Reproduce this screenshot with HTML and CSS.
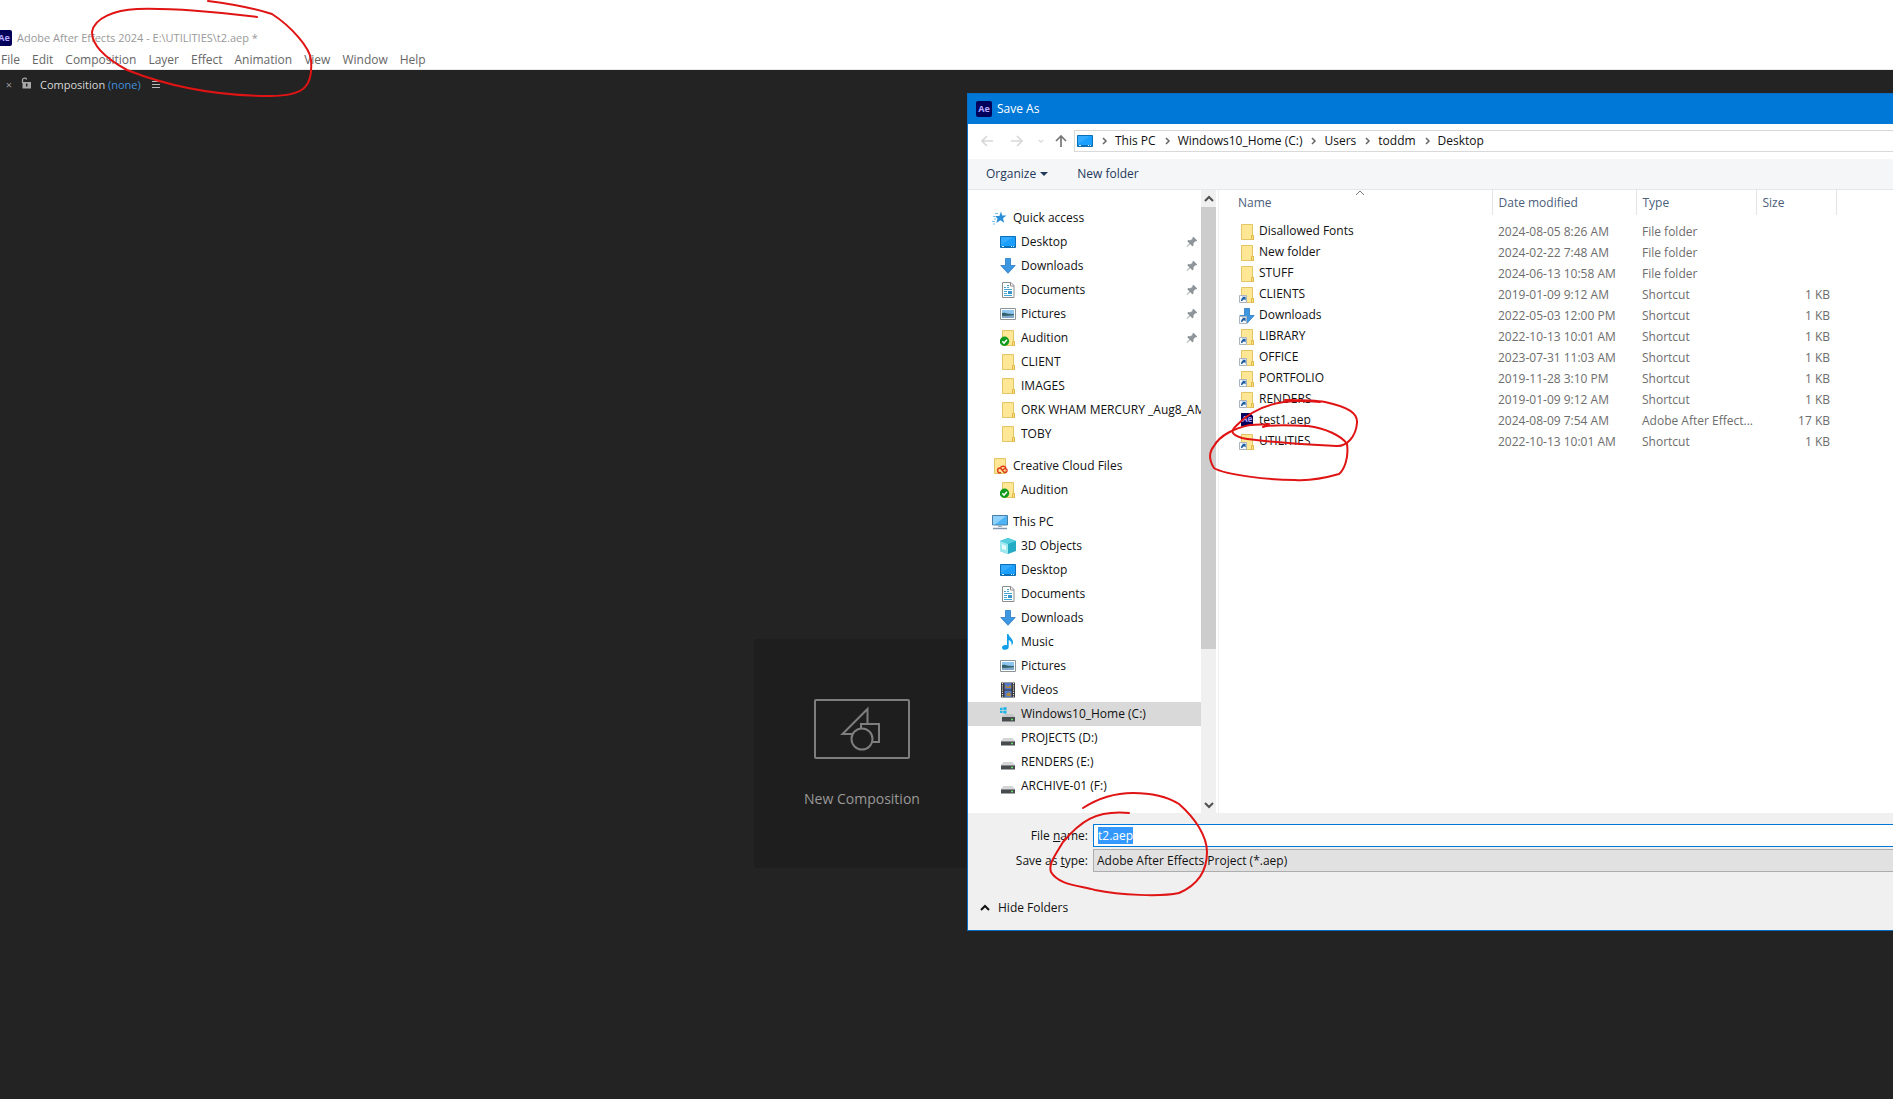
FILE: index.html
```
<!DOCTYPE html>
<html lang="en">
<head>
    <meta charset="UTF-8">
    <meta name="viewport" content="width=device-width, initial-scale=1.0">
    <title>Adobe After Effects 2024 - E:\UTILITIES\t2.aep *</title>
    <link rel="stylesheet" href="styles.css">
</head>
<body>
    <!-- Icon sprite -->
    <svg class="sprite" aria-hidden="true">
        <symbol id="ae" viewBox="0 0 16 16">
            <rect width="16" height="16" rx="2" fill="#00005b"/>
            <text x="8" y="11" text-anchor="middle" font-size="9" font-weight="bold" fill="#b4a8ff">Ae</text>
        </symbol>
        <symbol id="folder" viewBox="0 0 16 16">
            <path d="M2.500.5h11v11h1v4h-12z" fill="#ffe796" stroke="#e3c565"/>
            <path d="M12.500 15.500v-4h2v4z" fill="#ffe085" stroke="#dfba4a"/>
        </symbol>
        <symbol id="folder-ok" viewBox="0 0 16 16">
            <use href="#folder"/>
            <circle cx="4.500" cy="11.300" r="4.700" fill="#109a1c"/>
            <path d="M2.300 11.300l1.700 1.800 3-3.300" fill="none" stroke="#fff" stroke-width="1.500"/>
        </symbol>
        <symbol id="folder-cc" viewBox="0 0 16 16">
            <path d="M2.500.5h11v15h-11z" fill="#ffe796" stroke="#e3c565"/>
            <path d="M9 14.800H8a2.400 2.400 0 0 1 0-4.800c1.500 0 3 4.500 5 4.500a2 2 0 0 0 0-4c-1.300 0-2 1.500-3 2.300M8.500 9.500c1.500-2 5-1.500 5.500.8" fill="none" stroke="#e03a1c" stroke-width="1.400"/>
        </symbol>
        <symbol id="arrow-mark" viewBox="0 0 16 16">
            <path d="M.5 8.500h7v7h-7z" fill="#f4f8fc" stroke="#a9b4bf"/>
            <path d="M2 14c0-2 .8-3 2-3.300L3 9.800h3.600v3.600l-1-1C4 12.400 3.400 13 3.400 14z" fill="#1d5c9f"/>
        </symbol>
        <symbol id="folder-link" viewBox="0 0 16 16">
            <use href="#folder"/>
            <use href="#arrow-mark"/>
        </symbol>
        <symbol id="download" viewBox="0 0 16 16">
            <path d="M5.500.5h5v7h4.700L8 15.300.8 7.500h4.700z" fill="#3d96e0" stroke="#2a7bc4" stroke-width=".8"/>
        </symbol>
        <symbol id="download-link" viewBox="0 0 16 16">
            <use href="#download"/>
            <use href="#arrow-mark"/>
        </symbol>
        <symbol id="desktop" viewBox="0 0 16 16">
            <path d="M.5 2.500h15v11H.5z" fill="#1a9fff" stroke="#0b6fb8"/>
            <path d="M1 11L13 3H1z" fill="#45b2ff" opacity=".6"/>
            <path d="M1 12.500h14" stroke="#0b6fb8"/>
            <path d="M2 12.500h2m7 0h1m1 0h1" stroke="#d9f0ff"/>
        </symbol>
        <symbol id="document" viewBox="0 0 16 16">
            <path d="M2.500.5h8.500l3 3v12H2.500z" fill="#fff" stroke="#8c8c8c"/>
            <path d="M10.500.5v3.500H14" fill="none" stroke="#8c8c8c"/>
            <path d="M7 3.500h2M4 5.500h2m1 0h2M4 7.500h8M4 9.500h3M4 11.500h3M4 13.500h8" stroke="#42a5d5"/>
            <path d="M8 9h4v3H8z" fill="#3a95c8"/>
        </symbol>
        <symbol id="picture" viewBox="0 0 16 16">
            <path d="M.5 2.500h15v11H.5z" fill="#fff" stroke="#8c9399"/>
            <path d="M2 4h12v8H2z" fill="#8cc6f0"/>
            <path d="M2 7c3-1 5 1 12 1v4H2z" fill="#35606f"/>
            <path d="M2 10c4 0 8-.5 12-1v3H2z" fill="#7fa9c9"/>
        </symbol>
        <symbol id="star" viewBox="0 0 16 16">
            <path d="M9 1.500l1.200 4 4.300.1-3.500 2.600 1.200 4.600-3.800-2.600L4.300 13l1.200-4.600L3 6h4.400z" fill="#2b8fd8"/>
            <path d="M3 3.500h3M1 6.500h2M2 9h2M0 11.500h3M1 14h2" stroke="#7bbdea"/>
        </symbol>
        <symbol id="computer" viewBox="0 0 16 16">
            <path d="M.5 1.500h15v9.500H.5z" fill="#4db4f5" stroke="#4a7fa5"/>
            <path d="M1 2h13L3 10.500H1z" fill="#8ed2fb"/>
            <path d="M6 12.500h4" stroke="#9ab"/>
            <path d="M1 14.500h14" stroke="#8296b0" stroke-width="1.500"/>
        </symbol>
        <symbol id="cube" viewBox="0 0 16 16">
            <path d="M8 0l8 3v10l-8 3-8-3V3z" fill="#25abc4"/>
            <path d="M8 0l8 3-8 3-8-3z" fill="#55cfe0"/>
            <path d="M0 3l8 3v10l-8-3z" fill="#9ee9ee"/>
            <path d="M2 6l4 2v4l-4-1z" fill="#e6fbfb"/>
        </symbol>
        <symbol id="music" viewBox="0 0 16 16">
            <path d="M7 0h1.500c.3 3 4.500 4.500 4.500 8 0 1.500-.6 2.500-1.500 3.500.6-3-.8-4.700-2.800-5.500V13c0 1.700-1.400 2.800-3.500 2.800S2 14.800 2 13.400 3.800 10.800 7 11.200z" fill="#109fe8"/>
        </symbol>
        <symbol id="video" viewBox="0 0 16 16">
            <path d="M1 .5h14v15H1z" fill="#333"/>
            <path d="M2.500 1v14M13.500 1v14" stroke="#ddd" stroke-width="1.200" stroke-dasharray="1.200 1"/>
            <path d="M4.500 1h7v6.500h-7zM4.500 8.500h7V15h-7z" fill="#5478c8"/>
            <path d="M5 3l3 2 3-2v3H6zM6 12l4-2 1 4H7z" fill="#b08a3c"/>
        </symbol>
        <symbol id="drive" viewBox="0 0 16 16">
            <path d="M3.500 8h9l2.500 3H1z" fill="#d4d6d8"/>
            <path d="M1 11h14v4.500H1z" fill="#474b4e"/>
            <path d="M1 11.500h14" stroke="#85898c"/>
            <path d="M11 13.500h2" stroke="#65e066" stroke-width="1.500"/>
        </symbol>
        <symbol id="drive-win" viewBox="0 0 16 16">
            <path d="M6 8h7l2 3H1z" fill="#c4c6c8"/>
            <path d="M2 11h13v4.500H2z" fill="#474b4e"/>
            <path d="M11 13.500h2" stroke="#65e066" stroke-width="1.500"/>
            <path d="M0 2l2.500-.4v2.400H0zM3.300 1.500L6.500 1v3H3.300zM0 4.800h2.500v2.400L0 6.800zM3.300 4.800h3.200v3l-3.200-.5z" fill="#1db4e8"/>
        </symbol>
        <symbol id="pin" viewBox="0 0 12 12">
            <path d="M7.500.8l3.700 3.700-1 .9-.8-.2-2 2 .2 2.100-1.100 1.100-2.400-2.500L1 11l-.5-.4 3-3.200L1.300 5.200l1-1.100 2.300.2L6.600 2.400l-.1-.8z" fill="#8e959b"/>
        </symbol>
        <symbol id="chev-up" viewBox="0 0 10 10">
            <path d="M1 7l4-4 4 4" fill="none" stroke="currentColor" stroke-width="2"/>
        </symbol>
        <symbol id="chev-down" viewBox="0 0 10 10">
            <path d="M1 3l4 4 4-4" fill="none" stroke="currentColor" stroke-width="2"/>
        </symbol>
        <symbol id="chev-right" viewBox="0 0 10 10">
            <path d="M4 2l3 3-3 3" fill="none" stroke="currentColor" stroke-width="1.500"/>
        </symbol>
        <symbol id="arrow" viewBox="0 0 12 12">
            <path d="M12 6H1.500M6 1L1 6l5 5" fill="none" stroke="currentColor" stroke-width="1.700"/>
        </symbol>
    </svg>

    <header class="app-header">
        <div class="app-title">
            <svg class="app-logo"><use href="#ae"/></svg>
            <span>Adobe After Effects 2024 - E:\UTILITIES\t2.aep *</span>
        </div>
        <nav class="menu-bar">
            <button>File</button>
            <button>Edit</button>
            <button>Composition</button>
            <button>Layer</button>
            <button>Effect</button>
            <button>Animation</button>
            <button>View</button>
            <button>Window</button>
            <button>Help</button>
        </nav>
    </header>

    <main class="workspace">
        <div class="panel-tab">
            <button class="tab-close" aria-label="Close">×</button>
            <svg class="lock" viewBox="0 0 10 12"><path d="M1.500 6V3c0-2.500 4-2.500 4-.5" fill="none" stroke="#a8a8a8" stroke-width="1.300"/><path d="M1.500 5H10v6.500H1.500z" fill="#a8a8a8"/><path d="M5.700 6.500v3" stroke="#232323" stroke-width="1.500"/></svg>
            <span>Composition <a href="#">(none)</a></span>
            <button class="tab-menu" aria-label="Panel menu">
                <svg viewBox="0 0 8 8"><path d="M0 .5h8M0 3.500h8M0 6.500h8" stroke="#b8b8b8"/></svg>
            </button>
        </div>
        <div class="viewer">
            <button class="new-comp">
                <svg viewBox="0 0 96 60">
                    <rect x="1" y="1" width="94" height="58" rx="1"/>
                    <path d="M38 35H28.500L53.500 10v15M47 29v-4h18v18h-6"/>
                    <circle cx="48" cy="40" r="10.500"/>
                </svg>
                <span>New Composition</span>
            </button>
        </div>
    </main>

    <section class="dialog" role="dialog" aria-label="Save As">
        <div class="dialog-title">
            <svg class="icon"><use href="#ae"/></svg>
            <span>Save As</span>
        </div>

        <div class="nav-row">
            <button class="nav-btn" aria-label="Back" disabled><svg><use href="#arrow"/></svg></button>
            <button class="nav-btn forward" aria-label="Forward" disabled><svg><use href="#arrow"/></svg></button>
            <button class="nav-btn recent" aria-label="Recent" disabled><svg><use href="#chev-down"/></svg></button>
            <button class="nav-btn up" aria-label="Up"><svg><use href="#arrow"/></svg></button>
            <div class="address">
                <svg class="icon"><use href="#desktop"/></svg>
                <svg class="sep"><use href="#chev-right"/></svg>
                <a href="#">This PC</a>
                <svg class="sep"><use href="#chev-right"/></svg>
                <a href="#">Windows10_Home (C:)</a>
                <svg class="sep"><use href="#chev-right"/></svg>
                <a href="#">Users</a>
                <svg class="sep"><use href="#chev-right"/></svg>
                <a href="#">toddm</a>
                <svg class="sep"><use href="#chev-right"/></svg>
                <a href="#">Desktop</a>
            </div>
        </div>

        <div class="toolbar">
            <button>Organize <span class="caret"></span></button>
            <button>New folder</button>
        </div>

        <div class="panes">
            <nav class="tree">
                <ul>
                    <li class="root"><a href="#"><svg class="icon"><use href="#star"/></svg>Quick access</a></li>
                    <li><a href="#"><svg class="icon"><use href="#desktop"/></svg>Desktop<svg class="pin"><use href="#pin"/></svg></a></li>
                    <li><a href="#"><svg class="icon"><use href="#download"/></svg>Downloads<svg class="pin"><use href="#pin"/></svg></a></li>
                    <li><a href="#"><svg class="icon"><use href="#document"/></svg>Documents<svg class="pin"><use href="#pin"/></svg></a></li>
                    <li><a href="#"><svg class="icon"><use href="#picture"/></svg>Pictures<svg class="pin"><use href="#pin"/></svg></a></li>
                    <li><a href="#"><svg class="icon"><use href="#folder-ok"/></svg>Audition<svg class="pin"><use href="#pin"/></svg></a></li>
                    <li><a href="#"><svg class="icon"><use href="#folder"/></svg>CLIENT</a></li>
                    <li><a href="#"><svg class="icon"><use href="#folder"/></svg>IMAGES</a></li>
                    <li><a href="#"><svg class="icon"><use href="#folder"/></svg>ORK WHAM MERCURY _Aug8_AM</a></li>
                    <li><a href="#"><svg class="icon"><use href="#folder"/></svg>TOBY</a></li>
                </ul>
                <ul>
                    <li class="root"><a href="#"><svg class="icon"><use href="#folder-cc"/></svg>Creative Cloud Files</a></li>
                    <li><a href="#"><svg class="icon"><use href="#folder-ok"/></svg>Audition</a></li>
                </ul>
                <ul>
                    <li class="root"><a href="#"><svg class="icon"><use href="#computer"/></svg>This PC</a></li>
                    <li><a href="#"><svg class="icon"><use href="#cube"/></svg>3D Objects</a></li>
                    <li><a href="#"><svg class="icon"><use href="#desktop"/></svg>Desktop</a></li>
                    <li><a href="#"><svg class="icon"><use href="#document"/></svg>Documents</a></li>
                    <li><a href="#"><svg class="icon"><use href="#download"/></svg>Downloads</a></li>
                    <li><a href="#"><svg class="icon"><use href="#music"/></svg>Music</a></li>
                    <li><a href="#"><svg class="icon"><use href="#picture"/></svg>Pictures</a></li>
                    <li><a href="#"><svg class="icon"><use href="#video"/></svg>Videos</a></li>
                    <li class="selected"><a href="#"><svg class="icon"><use href="#drive-win"/></svg>Windows10_Home (C:)</a></li>
                    <li><a href="#"><svg class="icon"><use href="#drive"/></svg>PROJECTS (D:)</a></li>
                    <li><a href="#"><svg class="icon"><use href="#drive"/></svg>RENDERS (E:)</a></li>
                    <li><a href="#"><svg class="icon"><use href="#drive"/></svg>ARCHIVE-01 (F:)</a></li>
                </ul>
            </nav>
            <div class="scrollbar">
                <button aria-label="Scroll up"><svg><use href="#chev-up"/></svg></button>
                <div class="track"><div class="thumb"></div></div>
                <button aria-label="Scroll down"><svg><use href="#chev-down"/></svg></button>
            </div>

            <div class="files">
                <table>
                    <colgroup>
                        <col class="col-name"><col class="col-date"><col class="col-type"><col class="col-size"><col>
                    </colgroup>
                    <thead>
                        <tr>
                            <th>Name<svg class="sort" viewBox="0 0 10 6"><path d="M1 5l4-4 4 4" fill="none" stroke="#7a7a7a"/></svg></th>
                            <th>Date modified</th><th>Type</th><th>Size</th><th></th>
                        </tr>
                    </thead>
                    <tbody>
                        <tr><td><svg class="icon"><use href="#folder"/></svg>Disallowed Fonts</td><td>2024-08-05 8:26 AM</td><td>File folder</td><td></td><td></td></tr>
                        <tr><td><svg class="icon"><use href="#folder"/></svg>New folder</td><td>2024-02-22 7:48 AM</td><td>File folder</td><td></td><td></td></tr>
                        <tr><td><svg class="icon"><use href="#folder"/></svg>STUFF</td><td>2024-06-13 10:58 AM</td><td>File folder</td><td></td><td></td></tr>
                        <tr><td><svg class="icon"><use href="#folder-link"/></svg>CLIENTS</td><td>2019-01-09 9:12 AM</td><td>Shortcut</td><td>1 KB</td><td></td></tr>
                        <tr><td><svg class="icon"><use href="#download-link"/></svg>Downloads</td><td>2022-05-03 12:00 PM</td><td>Shortcut</td><td>1 KB</td><td></td></tr>
                        <tr><td><svg class="icon"><use href="#folder-link"/></svg>LIBRARY</td><td>2022-10-13 10:01 AM</td><td>Shortcut</td><td>1 KB</td><td></td></tr>
                        <tr><td><svg class="icon"><use href="#folder-link"/></svg>OFFICE</td><td>2023-07-31 11:03 AM</td><td>Shortcut</td><td>1 KB</td><td></td></tr>
                        <tr><td><svg class="icon"><use href="#folder-link"/></svg>PORTFOLIO</td><td>2019-11-28 3:10 PM</td><td>Shortcut</td><td>1 KB</td><td></td></tr>
                        <tr><td><svg class="icon"><use href="#folder-link"/></svg>RENDERS</td><td>2019-01-09 9:12 AM</td><td>Shortcut</td><td>1 KB</td><td></td></tr>
                        <tr><td><svg class="icon" viewBox="0 0 16 16"><path d="M2 0h9l3 3v10H2z" fill="#00005b"/><text x="8" y="9" text-anchor="middle" font-size="8" font-weight="bold" fill="#b4a8ff">Ae</text></svg>test1.aep</td><td>2024-08-09 7:54 AM</td><td>Adobe After Effect...</td><td>17 KB</td><td></td></tr>
                        <tr><td><svg class="icon"><use href="#folder-link"/></svg>UTILITIES</td><td>2022-10-13 10:01 AM</td><td>Shortcut</td><td>1 KB</td><td></td></tr>
                    </tbody>
                </table>
            </div>
        </div>

        <form class="dialog-footer">
            <label for="file-name">File <u>n</u>ame:</label>
            <input type="text" id="file-name" value="t2.aep">
            <label for="file-type">Save as <u>t</u>ype:</label>
            <select id="file-type">
                <option>Adobe After Effects Project (*.aep)</option>
            </select>
            <button type="button" class="hide-folders"><svg><use href="#chev-up"/></svg>Hide Folders</button>
        </form>
    </section>

    <!-- Red pen marks -->
    <svg class="marks" width="1893" height="1099" aria-hidden="true">
        <path d="M208 1C232 4 256 9 272 14C292 27 310 48 311 60C313 85 306 96 270 96C215 96 165 85 127 70C105 58 92 45 92 32C94 18 115 10 137 9C170 8 220 12 257 17"/>
        <path d="M1285 400C1300 400 1320 401 1325 402C1348 407 1358 413 1357 423C1356 436 1347 447 1336 446C1300 444 1262 442 1242 438C1230 434 1231 431 1236 426C1248 413 1262 405 1284 402C1298 400 1310 401 1320 402"/>
        <path d="M1263 427C1268 425 1290 425 1308 426C1325 428 1342 436 1347 444C1349 458 1344 470 1339 474C1325 478 1310 481 1295 480C1270 480 1225 475 1214 468C1209 460 1209 452 1214 446C1220 435 1235 428 1250 425C1258 424 1265 425 1269 424"/>
        <path d="M1083 808C1100 797 1115 793 1133 793C1150 793 1166 796 1179 804C1195 818 1207 836 1207 852C1207 868 1200 884 1179 893C1160 897 1120 895 1095 890C1075 885 1058 884 1051 872C1048 864 1056 854 1063 842C1080 822 1095 810 1129 813"/>
    </svg>

    <script>
        // Focus the file name with its text selected, as when the dialog opens
        const fileName = document.getElementById('file-name');
        fileName.focus();
        fileName.select();
    </script>
</body>
</html>
```
FILE: styles.css
```
* {
    box-sizing: border-box;
}

body {
    margin: 0;
    min-height: 100vh;
    display: flex;
    flex-direction: column;
    position: relative;
    overflow: hidden;
    background-color: #232323;
    font-family: "Open Sans", "Noto Sans", sans-serif;
    font-size: 12px;
    line-height: 16px;
    color: #111;
}

button {
    background: none;
    border: none;
    padding: 0;
    font: inherit;
    color: inherit;
    cursor: pointer;
}

a {
    color: inherit;
    text-decoration: none;
}

ul {
    list-style: none;
    margin: 0;
    padding: 0;
}

svg {
    flex: none;
}

.sprite {
    display: none;
}

.icon {
    width: 16px;
    height: 16px;
}

/* App window */
.app-header {
    height: 70px;
    padding-top: 30px;
    background-color: white;
    border-bottom: 1px solid #e8e8e8;
}

.app-title {
    display: flex;
    align-items: center;
    gap: 5px;
    color: #999;
    font-size: 11px;
}

.app-logo {
    width: 16px;
    height: 16px;
    margin-left: -4px;
}

.menu-bar {
    display: flex;
    gap: 12px;
    padding: 6px 1px;
    color: #666;
}

.workspace {
    flex: 1;
    display: flex;
    flex-direction: column;
}

.panel-tab {
    display: flex;
    align-items: center;
    height: 30px;
    padding-left: 5px;
    color: #d8d8d8;
    font-size: 11px;
}

.panel-tab a {
    color: #4090dc;
}

.tab-close {
    width: 8px;
    color: #999;
}

.lock {
    width: 10px;
    height: 12px;
    margin: 0 9px 4px 8px;
}

.tab-menu {
    display: flex;
    margin-left: 11px;
}

.tab-menu svg {
    width: 8px;
    height: 8px;
}

.viewer {
    flex: 1;
    display: flex;
    justify-content: center;
    align-items: start;
    padding: 539px 169px 0 0;
}

.new-comp {
    display: flex;
    flex-direction: column;
    align-items: center;
    gap: 31px;
    width: 216px;
    padding: 60px 0;
    background-color: #1e1e1e;
    border-radius: 4px;
    color: #999;
    font-size: 14px;
    line-height: 18px;
}

.new-comp svg {
    width: 96px;
    height: 60px;
    fill: #1e1e1e;
    stroke: #7e7e7e;
    stroke-width: 2;
}

/* Save As window */
.dialog {
    position: absolute;
    top: 93px;
    left: 967px;
    right: -8px;
    background-color: white;
    border: 1px solid #0a6fc2;
}

.dialog-title {
    display: flex;
    align-items: center;
    gap: 5px;
    height: 30px;
    padding: 0 8px 1px;
    background-color: #0078d7;
    color: white;
}

.nav-row {
    display: flex;
    align-items: center;
    height: 35px;
    padding: 0 0 2px 13px;
}

.nav-btn {
    display: flex;
    color: #777;
}

.nav-btn:disabled {
    color: #d8d8d8;
}

.nav-btn svg {
    width: 12px;
    height: 12px;
}

.forward {
    margin-left: 18px;
    transform: rotate(180deg);
}

.recent {
    margin: 0 11px 0 15px;
}

.nav-btn.recent svg {
    width: 6px;
    height: 6px;
}

.up {
    transform: rotate(90deg);
}

.address {
    flex: 1;
    display: flex;
    align-items: center;
    gap: 6px;
    height: 22px;
    margin-left: 7px;
    padding-left: 2px;
    border: 1px solid #d9d9d9;
}

.sep {
    width: 10px;
    height: 10px;
    color: #666;
}

.toolbar {
    display: flex;
    align-items: center;
    gap: 29px;
    height: 31px;
    padding-left: 18px;
    background-color: #f5f6f7;
    border-bottom: 1px solid #e5e8eb;
    color: #1e395b;
}

.toolbar button {
    display: flex;
    align-items: center;
    gap: 4px;
}

.caret {
    border: 4px solid transparent;
    border-top-color: #1e395b;
    border-bottom: 0;
}

.panes {
    display: flex;
}

.tree {
    display: flex;
    flex-direction: column;
    gap: 8px;
    width: 233px;
    padding: 16px 0 15px;
    overflow: hidden;
}

.tree a {
    display: flex;
    align-items: center;
    gap: 5px;
    height: 24px;
    padding-left: 32px;
    white-space: nowrap;
}

.tree .root a {
    padding-left: 24px;
}

.selected {
    background-color: #d9d9d9;
}

.pin {
    width: 12px;
    height: 12px;
    margin-left: auto;
    margin-right: 3px;
}

.scrollbar {
    display: flex;
    flex-direction: column;
    width: 15px;
    background-color: #f0f0f0;
}

.scrollbar button {
    display: flex;
    justify-content: center;
    align-items: center;
    height: 17px;
    color: #505050;
}

.scrollbar svg,
.hide-folders svg {
    width: 10px;
    height: 10px;
}

.track {
    flex: 1;
}

.thumb {
    height: 75%;
    background-color: #cdcdcd;
}

.files {
    flex: 1;
    margin-left: 2px;
    border-left: 1px solid #f0f0f0;
}

table {
    width: 100%;
    table-layout: fixed;
    border-collapse: collapse;
    color: #6d6d6d;
}

.col-name {
    width: 273px;
}

.col-date {
    width: 144px;
}

.col-type {
    width: 120px;
}

.col-size {
    width: 80px;
}

th {
    position: relative;
    height: 25px;
    padding: 0 6px;
    border-right: 1px solid #e5e5e5;
    color: #4c607a;
    font-weight: normal;
    text-align: left;
}

th:first-child {
    padding-left: 19px;
}

.sort {
    position: absolute;
    top: 0;
    left: 50%;
    width: 10px;
    height: 6px;
}

tbody::before {
    content: "";
    display: block;
    height: 6px;
}

td {
    height: 21px;
    padding: 0 6px;
    white-space: nowrap;
}

td:first-child {
    padding-left: 20px;
    color: #111;
}

td:nth-child(4) {
    text-align: right;
}

td .icon {
    margin-right: 4px;
    vertical-align: middle;
}

.dialog-footer {
    display: grid;
    grid-template-columns: 120px 1fr;
    column-gap: 5px;
    row-gap: 2px;
    align-items: center;
    padding: 11px 0 14px;
    background-color: #f0f0f0;
}

.dialog-footer label {
    text-align: right;
}

.dialog-footer input,
.dialog-footer select {
    height: 23px;
    width: 100%;
    padding: 0 4px;
    border: 1px solid #0078d7;
    border-radius: 0;
    background-color: white;
    font: inherit;
    color: #111;
    outline: none;
    appearance: none;
}

.dialog-footer select {
    padding: 0 3px;
    border-color: #adadad;
    background-color: #e1e1e1;
}

.dialog-footer input::selection {
    background-color: #3399ff;
    color: white;
}

.hide-folders {
    grid-column: 1 / -1;
    justify-self: start;
    display: flex;
    align-items: center;
    gap: 8px;
    margin: 26px 0 0 12px;
}

/* Pen marks lie over both windows */
.marks {
    position: absolute;
    top: 0;
    left: 0;
    fill: none;
    stroke: #e01414;
    stroke-width: 2;
    stroke-linecap: round;
    pointer-events: none;
}
```
